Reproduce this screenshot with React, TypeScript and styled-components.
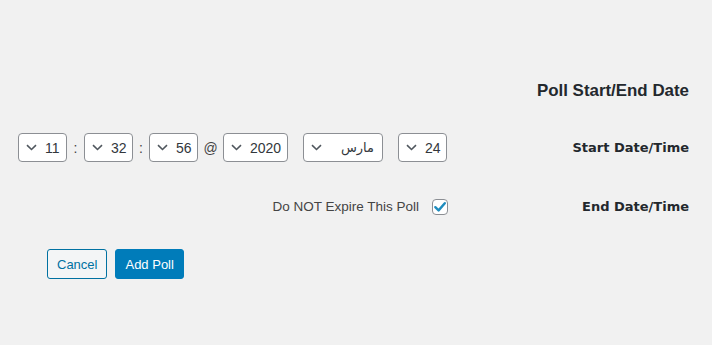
import React from 'react';
import styled, { createGlobalStyle } from 'styled-components';

const GlobalStyle = createGlobalStyle`
  body {
    margin: 0;
    background: #f1f1f1;
    color: #444;
    font-family: "Liberation Sans", Arial, sans-serif;
  }
`;

const Page = styled.div`
  width: 712px;
  height: 345px;
  box-sizing: border-box;
  padding: 79px 23px 0 0;
`;

const Heading = styled.h3`
  margin: 0 0 15px;
  font-family: "Liberation Sans", Arial, sans-serif;
  font-size: 16.9px;
  line-height: 24px;
  font-weight: 700;
  color: #23282d;
  text-align: right;
`;

const FormRow = styled.div`
  display: grid;
  grid-template-columns: minmax(0, 1fr) 242px;
  align-items: center;
  min-height: 59px;
`;

const Field = styled.div`
  display: flex;
  justify-content: flex-end;
  align-items: center;
  gap: ${p => p.$gap ?? 0}px;
`;

const Label = styled.div`
  font-family: "DejaVu Sans", Tahoma, sans-serif;
  font-size: 13px;
  font-weight: 700;
  color: #23282d;
  text-align: right;
  white-space: nowrap;
`;

const TimeGroup = styled.div`
  display: flex;
  align-items: center;
`;

const SelectBox = styled.div`
  box-sizing: border-box;
  flex: none;
  height: 29px;
  width: ${p => p.$width}px;
  display: flex;
  align-items: center;
  justify-content: space-between;
  padding: 0 8px 0 7px;
  background: #fff;
  border: 1px solid #8c8f94;
  border-radius: 4px;
  font-family: "Liberation Sans", Tahoma, sans-serif;
  font-size: 14px;
  color: #32373c;

  svg {
    flex: none;
    margin-right: 8px;
  }
`;

const Value = styled.span`
  font-family: ${p => (p.$arabic ? '"DejaVu Sans", Tahoma, sans-serif' : 'inherit')};
  font-size: ${p => (p.$arabic ? '13px' : 'inherit')};
`;

const Sep = styled.span`
  flex: none;
  width: ${p => p.$w}px;
  text-align: center;
  font-size: 14px;
  color: #444;
`;

const CheckLabel = styled.label`
  display: flex;
  align-items: center;
  gap: 13px;
  font-size: 13.5px;
  color: #444;
  margin-right: -1px;
`;

const CheckBox = styled.span`
  box-sizing: border-box;
  width: 16px;
  height: 16px;
  border: 1px solid #8c8f94;
  border-radius: 4px;
  background: #fff;
  display: flex;
  align-items: center;
  justify-content: center;
`;

const Actions = styled.div`
  display: flex;
  gap: 8px;
  margin-top: 13px;
  padding-left: 47px;
`;

const Button = styled.button`
  box-sizing: border-box;
  height: 30px;
  padding: 0 9px;
  border-radius: 3px;
  font-family: "Liberation Sans", Tahoma, sans-serif;
  font-size: 13px;
  border: 1px solid ${p => (p.$primary ? '#007cba' : '#0071a1')};
  background: ${p => (p.$primary ? '#007cba' : '#f3f5f6')};
  color: ${p => (p.$primary ? '#fff' : '#0071a1')};
  cursor: pointer;
`;

const Chevron = () => (
  <svg width="11" height="7" viewBox="0 0 11 7">
    <path d="M1 1.2 L5.5 5.5 L10 1.2" fill="none" stroke="#50575e" strokeWidth="1.6" />
  </svg>
);

const Select = ({ value, width, arabic }: { value: string; width: number; arabic?: boolean }) => (
  <SelectBox $width={width}>
    <Chevron />
    <Value $arabic={arabic}>{value}</Value>
  </SelectBox>
);

export default function App() {
  return (
    <Page>
      <GlobalStyle />
      <Heading>Poll Start/End Date</Heading>
      <FormRow>
        <Field $gap={15}>
          <TimeGroup>
            <Select value="11" width={49} />
            <Sep $w={17}>:</Sep>
            <Select value="32" width={49} />
            <Sep $w={16}>:</Sep>
            <Select value="56" width={49} />
            <Sep $w={25}>@</Sep>
            <Select value="2020" width={65} />
          </TimeGroup>
          <Select value="مارس" width={80} arabic />
          <Select value="24" width={49} />
        </Field>
        <Label>Start Date/Time</Label>
      </FormRow>
      <FormRow>
        <Field>
          <CheckLabel>
            Do NOT Expire This Poll
            <CheckBox>
              <svg width="14" height="14" viewBox="0 0 14 14">
                <path d="M2.3 7.2 L5.6 10.4 L11.8 3.2" fill="none" stroke="#1e8cbe" strokeWidth="2.4" strokeLinecap="round" strokeLinejoin="round" />
              </svg>
            </CheckBox>
          </CheckLabel>
        </Field>
        <Label>End Date/Time</Label>
      </FormRow>
      <Actions>
        <Button>Cancel</Button>
        <Button $primary>Add Poll</Button>
      </Actions>
    </Page>
  );
}
